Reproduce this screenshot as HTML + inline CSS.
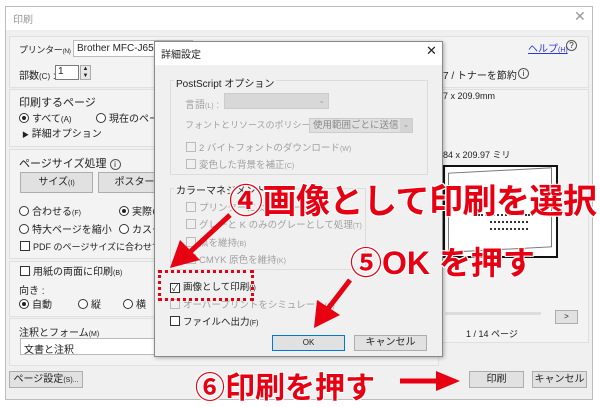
<!DOCTYPE html>
<html><head><meta charset="utf-8"><style>
*{margin:0;padding:0;box-sizing:border-box}
body{width:600px;height:406px;background:#fff;position:relative;overflow:hidden;font-family:"Liberation Sans","Noto Sans CJK JP",sans-serif;font-size:10px;color:#222}
.a{position:absolute;white-space:nowrap}
.btn{position:absolute;background:#e1e1e1;border:1px solid #adadad;text-align:center;font-size:10px;white-space:nowrap}
.cb{display:inline-block;width:10px;height:10px;border:1px solid #333;background:#fff;vertical-align:-1px;margin-right:3px}
.g{color:#a0a0a0}
.g .cb{border-color:#bbb;background:#f0f0f0}
.rd{display:inline-block;width:10px;height:10px;border:1px solid #333;border-radius:50%;background:#fff;vertical-align:-1px;margin-right:3px;position:relative}
.rd.on::after{content:"";position:absolute;left:2px;top:2px;width:4px;height:4px;border-radius:50%;background:#222}
.red{position:absolute;color:#e60012;font-weight:bold;white-space:nowrap;font-family:"Liberation Sans","Noto Sans CJK JP",sans-serif;text-shadow:-1px -1px 0 #fff,1px -1px 0 #fff,-1px 1px 0 #fff,1px 1px 0 #fff}
</style></head><body>
<div class="a" style="left:5px;top:6px;width:588px;height:394px;border:1px solid #bcbcbc;background:#f0f0f0"></div>
<div class="a" style="left:6px;top:7px;width:586px;height:23px;background:#fff"></div>
<div class="a" style="left:13px;top:11px;color:#999;font-size:10px">印刷</div>
<div class="a" style="left:574px;top:8px;color:#999;font-size:14px">✕</div>
<div class="a" style="left:9px;top:36px;width:580px;height:52px;background:#f3f3f3;border:1px solid #e0e0e0"></div>
<div class="a" style="left:19px;top:43px;font-size:9px;letter-spacing:-0.3px">プリンター<span style="font-size:6.5px">(N)</span> :</div>
<div class="a" style="left:73px;top:40px;width:120px;height:17px;background:#fff;border:1px solid #bbb;padding:2px 3px">Brother MFC-J6570C</div>
<div class="a" style="left:19px;top:67px">部数<span style="font-size:8px">(C)</span> :</div>
<div class="a" style="left:55px;top:65px;width:24px;height:15px;background:#fff;border:1px solid #7a7a7a;padding:0 2px">1</div>
<div class="a" style="left:80px;top:65px;width:11px;height:15px;border:1px solid #aaa;background:#e8e8e8;font-size:6px;line-height:7px;text-align:center">▲<br>▼</div>
<div class="a" style="left:528px;top:40px;color:#2a39d8;text-decoration:underline">ヘルプ<span style="font-size:7px">(H)</span></div>
<div class="a" style="left:566px;top:40px;width:11px;height:11px;border:1px solid #555;border-radius:50%;font-size:8px;text-align:center;line-height:9px">?</div>
<div class="a" style="left:443px;top:67px">7 / トナーを節約</div>
<div class="a" style="left:518px;top:68px;width:11px;height:11px;border:1px solid #555;border-radius:50%;font-size:8px;text-align:center;line-height:9px">i</div>
<div class="a" style="left:9px;top:89px;width:430px;height:58px;background:#f3f3f3;border:1px solid #e0e0e0"></div>
<div class="a" style="left:19px;top:94px;font-size:11px">印刷するページ</div>
<div class="a" style="left:19px;top:110px"><span class="rd on"></span>すべて<span style="font-size:8px">(A)</span></div>
<div class="a" style="left:96px;top:110px"><span class="rd"></span>現在のページ</div>
<div class="a" style="left:22px;top:125px"><span style="font-size:7px">▶</span> 詳細オプション</div>
<div class="a" style="left:9px;top:149px;width:430px;height:110px;background:#f3f3f3;border:1px solid #e0e0e0"></div>
<div class="a" style="left:19px;top:155px;font-size:11px">ページサイズ処理 <span style="display:inline-block;width:11px;height:11px;border:1px solid #555;border-radius:50%;font-size:8px;text-align:center;line-height:9px">i</span></div>
<div class="btn" style="left:20px;top:172px;width:73px;height:21px;line-height:19px">サイズ<span style="font-size:7px">(I)</span></div>
<div class="btn" style="left:98px;top:172px;width:73px;height:21px;line-height:19px">ポスター</div>
<div class="a" style="left:19px;top:203px"><span class="rd"></span>合わせる<span style="font-size:7px">(F)</span></div>
<div class="a" style="left:119px;top:203px"><span class="rd on"></span>実際のサイズ</div>
<div class="a" style="left:19px;top:221px"><span class="rd"></span>特大ページを縮小</div>
<div class="a" style="left:119px;top:221px"><span class="rd"></span>カスタム</div>
<div class="a" style="left:20px;top:240px;font-size:9px"><span class="cb"></span>PDF のページサイズに合わせて用紙を選択</div>
<div class="a" style="left:9px;top:261px;width:430px;height:56px;background:#f3f3f3;border:1px solid #e0e0e0"></div>
<div class="a" style="left:20px;top:263px"><span class="cb"></span>用紙の両面に印刷<span style="font-size:7px">(B)</span></div>
<div class="a" style="left:19px;top:282px">向き :</div>
<div class="a" style="left:19px;top:296px"><span class="rd on"></span>自動</div>
<div class="a" style="left:78px;top:296px"><span class="rd"></span>縦</div>
<div class="a" style="left:123px;top:296px"><span class="rd"></span>横</div>
<div class="a" style="left:9px;top:318px;width:430px;height:48px;background:#f3f3f3;border:1px solid #e0e0e0"></div>
<div class="a" style="left:19px;top:324px">注釈とフォーム<span style="font-size:7px">(M)</span></div>
<div class="a" style="left:20px;top:338px;width:200px;height:17px;background:#fff;border:1px solid #bbb;padding:2px 3px">文書と注釈</div>
<div class="btn" style="left:9px;top:371px;width:74px;height:17px;line-height:15px">ページ設定<span style="font-size:7px">(S)...</span></div>
<div class="a" style="left:441px;top:89px;width:148px;height:254px;background:#f3f3f3;border:1px solid #e0e0e0"></div>
<div class="a" style="left:443px;top:91px;font-size:9px">7 x 209.9mm</div>
<div class="a" style="left:443px;top:148px;font-size:9px">84 x 209.97 ミリ</div>
<div class="a" style="left:443px;top:165px;width:115px;height:93px;background:#fff;border:2px solid #111"></div>
<div class="a" style="left:448px;top:170px;width:104px;height:80px;border:1px solid #777;transform:skewY(-3deg)"></div>
<div class="a" style="left:478px;top:214px;width:52px;height:2px;border-top:2px dotted #333"></div>
<div class="a" style="left:490px;top:221px;width:38px;height:2px;border-top:2px dotted #333"></div>
<div class="a" style="left:490px;top:228px;width:38px;height:2px;border-top:2px dotted #333"></div>
<div class="a" style="left:445px;top:312px;width:96px;height:3px;background:#ddd"></div>
<div class="btn" style="left:555px;top:310px;width:23px;height:14px;font-size:8px;line-height:12px">&gt;</div>
<div class="a" style="left:466px;top:327px;font-size:9px">1 / 14 ページ</div>
<div class="btn" style="left:469px;top:371px;width:55px;height:17px;line-height:15px">印刷</div>
<div class="btn" style="left:532px;top:371px;width:55px;height:17px;line-height:15px">キャンセル</div>
<div class="a" style="left:154px;top:41px;width:289px;height:316px;background:#f0f0f0;border:1px solid #888;box-shadow:1px 1px 4px rgba(0,0,0,.3)"></div>
<div class="a" style="left:155px;top:42px;width:287px;height:23px;background:#fff"></div>
<div class="a" style="left:161px;top:46px">詳細設定</div>
<div class="a" style="left:426px;top:43px;font-size:13px">✕</div>
<div class="a" style="left:170px;top:80px;width:258px;height:95px;border:1px solid #dcdcdc"></div>
<div class="a" style="left:174px;top:75px;background:#f0f0f0;padding:0 2px">PostScript オプション</div>
<div class="a g" style="left:185px;top:96px">言語<span style="font-size:7px">(L)</span> :</div>
<div class="a" style="left:224px;top:93px;width:105px;height:16px;background:#d8d8d8;border:1px solid #ccc;color:#aaa;text-align:right;padding-right:3px;font-size:8px;line-height:14px">⌄</div>
<div class="a g" style="left:185px;top:118px;font-size:9px">フォントとリソースのポリシー<span style="font-size:7px">(N)</span> :</div>
<div class="a" style="left:309px;top:118px;width:104px;height:15px;background:#e0e0e0;border:1px solid #ccc;color:#888;padding-left:3px;line-height:13px;font-size:9.5px">使用範囲ごとに送信</div>
<div class="a" style="left:400px;top:119px;width:12px;height:13px;background:#d4d4d4;color:#999;text-align:center;font-size:8px;line-height:11px">⌄</div>
<div class="a g" style="left:186px;top:140px;font-size:9.5px"><span class="cb"></span>2 バイトフォントのダウンロード<span style="font-size:7px">(W)</span></div>
<div class="a g" style="left:186px;top:157px;font-size:9.5px"><span class="cb"></span>変色した背景を補正<span style="font-size:7px">(C)</span></div>
<div class="a" style="left:170px;top:188px;width:196px;height:82px;border:1px solid #dcdcdc"></div>
<div class="a" style="left:174px;top:182px;background:#f0f0f0;padding:0 2px">カラーマネジメント</div>
<div class="a g" style="left:186px;top:200px;font-size:9.5px"><span class="cb"></span>プリンターによるカラー管理</div>
<div class="a g" style="left:186px;top:217px;font-size:9.5px"><span class="cb"></span>グレーと K のみのグレーとして処理<span style="font-size:7px">(T)</span></div>
<div class="a g" style="left:186px;top:235px;font-size:9.5px"><span class="cb"></span>黒を維持<span style="font-size:7px">(B)</span></div>
<div class="a g" style="left:186px;top:252px;font-size:9.5px"><span class="cb"></span>CMYK 原色を維持<span style="font-size:7px">(K)</span></div>
<div class="a" style="left:170px;top:279px;font-size:9.5px"><span class="cb" style="text-align:center;font-size:9px;line-height:8px">✓</span>画像として印刷<span style="font-size:7px">(I)</span></div>
<div class="a g" style="left:170px;top:297px;font-size:9.5px"><span class="cb"></span>オーバープリントをシミュレート<span style="font-size:7px">(O)</span></div>
<div class="a" style="left:170px;top:314px;font-size:9.5px"><span class="cb"></span>ファイルへ出力<span style="font-size:7px">(F)</span></div>
<div class="btn" style="left:272px;top:335px;width:73px;height:16px;border:1px solid #0078d7;line-height:14px;font-size:8px">OK</div>
<div class="btn" style="left:354px;top:335px;width:73px;height:16px;line-height:14px">キャンセル</div>
<div class="a" style="left:158px;top:270px;width:96px;height:31px;border:3px dotted #e60012"></div>
<svg class="a" style="left:0;top:0" width="600" height="406">
<g stroke="#e60012" stroke-width="5" fill="#e60012">
<line x1="230" y1="215" x2="190" y2="252"/>
<polygon points="170,268 180,240 200,260" stroke="none"/>
<line x1="350" y1="280" x2="327" y2="310"/>
<polygon points="314,328 317,300 340,315" stroke="none"/>
<line x1="400" y1="381" x2="440" y2="381"/>
<polygon points="460,381 436,371 436,391" stroke="none"/>
</g></svg>
<div class="red" style="left:229px;top:174px;font-size:34px;letter-spacing:-0.5px">④画像として印刷を選択</div>
<div class="red" style="left:350px;top:238px;font-size:32px">⑤OK を押す</div>
<div class="red" style="left:195px;top:363px;font-size:30px">⑥印刷を押す</div>
</body></html>
